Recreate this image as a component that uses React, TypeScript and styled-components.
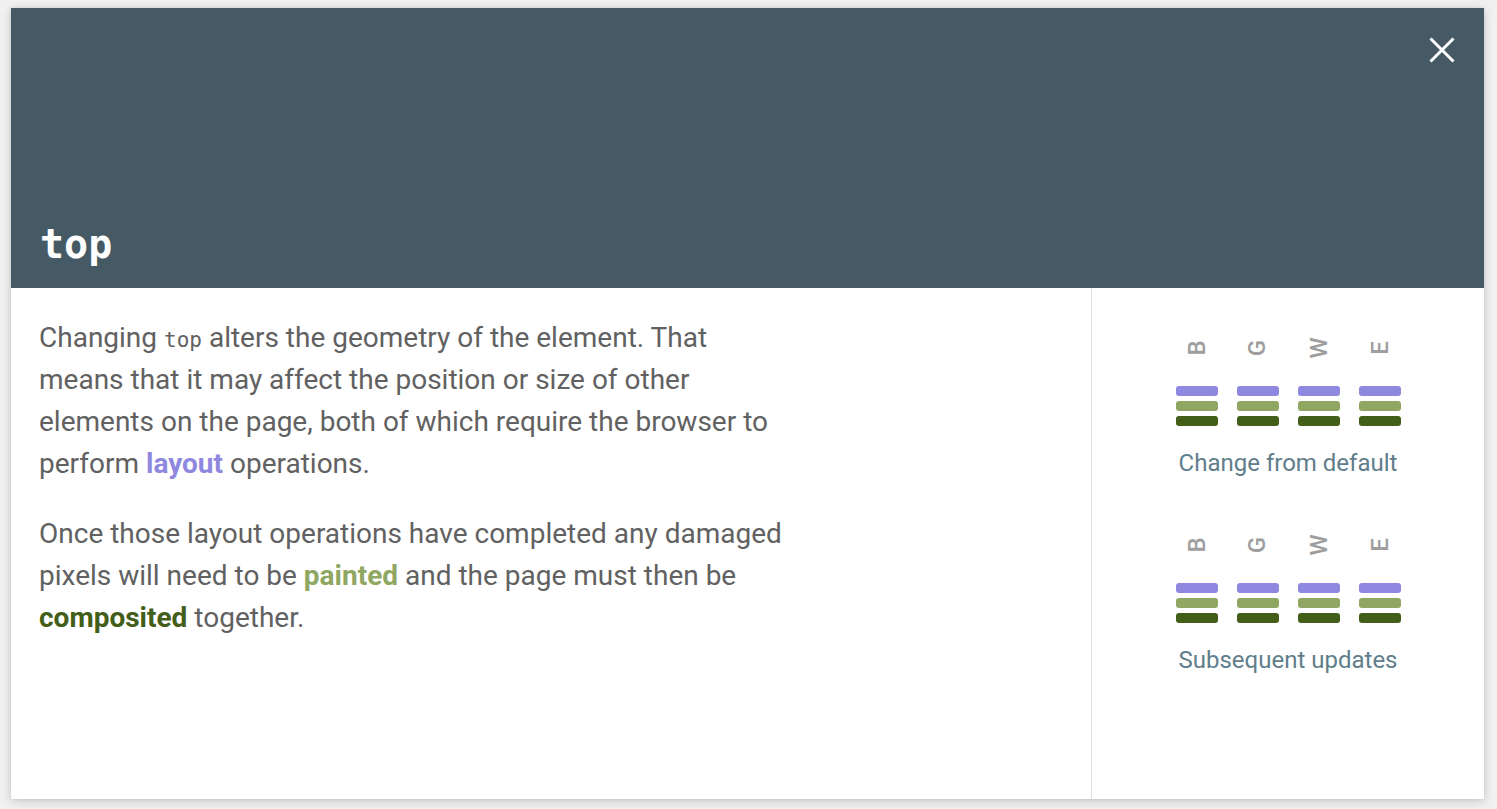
import React from "react";
import styled, { createGlobalStyle } from "styled-components";

const Global = createGlobalStyle`
  html, body { margin: 0; padding: 0; }
  body {
    background: #f1f1f1;
    font-family: Roboto, "Liberation Sans", sans-serif;
  }
`;

const Page = styled.div`
  width: 1497px;
  height: 809px;
  box-sizing: border-box;
  padding: 8px 13px 10px 11px;
`;

const Card = styled.div`
  height: 791px;
  background: #fff;
  display: flex;
  flex-direction: column;
  box-shadow: 0 2px 10px rgba(0, 0, 0, 0.18), 0 0 3px rgba(0, 0, 0, 0.08);
`;

const Header = styled.header`
  position: relative;
  height: 280px;
  background: #455a64;
  display: flex;
  align-items: flex-end;
  padding: 0 29px 24px;
  box-sizing: border-box;
`;

const Title = styled.h1`
  margin: 0;
  font-family: "DejaVu Sans Mono", "Liberation Mono", monospace;
  font-size: 40px;
  font-weight: 700;
  color: #fff;
  line-height: 1;
`;

const CloseButton = styled.button`
  position: absolute;
  top: 26px;
  right: 26px;
  width: 32px;
  height: 32px;
  padding: 0;
  border: 0;
  background: transparent;
  display: flex;
  align-items: center;
  justify-content: center;
`;

const Body = styled.div`
  flex: 1;
  display: flex;
`;

const Description = styled.div`
  flex: 1;
  padding: 29px 28px;
`;

const Para = styled.p`
  margin: 0 0 28px;
  max-width: 746px;
  font-size: 28px;
  line-height: 42px;
  color: #616161;
`;

const Code = styled.code`
  font-family: "DejaVu Sans Mono", "Liberation Mono", monospace;
  font-size: 21px;
  line-height: 1;
`;

const Term = styled.strong<{ $c: string }>`
  font-weight: 700;
  color: ${(p) => p.$c};
`;

const Side = styled.aside`
  width: 392px;
  border-left: 1px solid #e0e0e0;
  display: flex;
  flex-direction: column;
  align-items: center;
  padding-top: 39px;
  gap: 47px;
`;

const Group = styled.div`
  display: flex;
  flex-direction: column;
  align-items: center;
`;

const Columns = styled.div`
  display: flex;
  gap: 19px;
`;

const Column = styled.div`
  width: 42px;
  display: flex;
  flex-direction: column;
  align-items: center;
  gap: 5px;
`;

const Letter = styled.span`
  display: block;
  height: 42px;
  line-height: 42px;
  font-size: 24px;
  font-weight: 500;
  color: #9e9e9e;
  transform: rotate(-90deg);
  margin-bottom: 12px;
`;

const Bar = styled.span<{ $c: string }>`
  display: block;
  width: 42px;
  height: 10px;
  border-radius: 3px;
  background: ${(p) => p.$c};
`;

const Caption = styled.div`
  margin-top: 23px;
  font-size: 24px;
  line-height: 28px;
  color: #607d8b;
`;

const PURPLE = "#8f88e0";
const LIGHT = "#8fa762";
const DARK = "#435e18";

const letters = ["B", "G", "W", "E"];

function Stack({ label }: { label: string }) {
  return (
    <Group>
      <Columns>
        {letters.map((l) => (
          <Column key={l}>
            <Letter>{l}</Letter>
            <Bar $c={PURPLE} />
            <Bar $c={LIGHT} />
            <Bar $c={DARK} />
          </Column>
        ))}
      </Columns>
      <Caption>{label}</Caption>
    </Group>
  );
}

export default function App() {
  return (
    <Page>
      <Global />
      <Card>
        <Header>
          <Title>top</Title>
          <CloseButton aria-label="Close">
            <svg width="26" height="26" viewBox="0 0 26 26">
              <path d="M1.5 1.5 L24.5 24.5 M24.5 1.5 L1.5 24.5" stroke="#fff" strokeWidth="3" />
            </svg>
          </CloseButton>
        </Header>
        <Body>
          <Description>
            <Para>
              Changing <Code>top</Code> alters the geometry of the element. That means that it may
              affect the position or size of other elements on the page, both of which require the
              browser to perform <Term $c={PURPLE}>layout</Term> operations.
            </Para>
            <Para>
              Once those layout operations have completed any damaged pixels will need to be{" "}
              <Term $c={LIGHT}>painted</Term> and the page must then be{" "}
              <Term $c={DARK}>composited</Term> together.
            </Para>
          </Description>
          <Side>
            <Stack label="Change from default" />
            <Stack label="Subsequent updates" />
          </Side>
        </Body>
      </Card>
    </Page>
  );
}
